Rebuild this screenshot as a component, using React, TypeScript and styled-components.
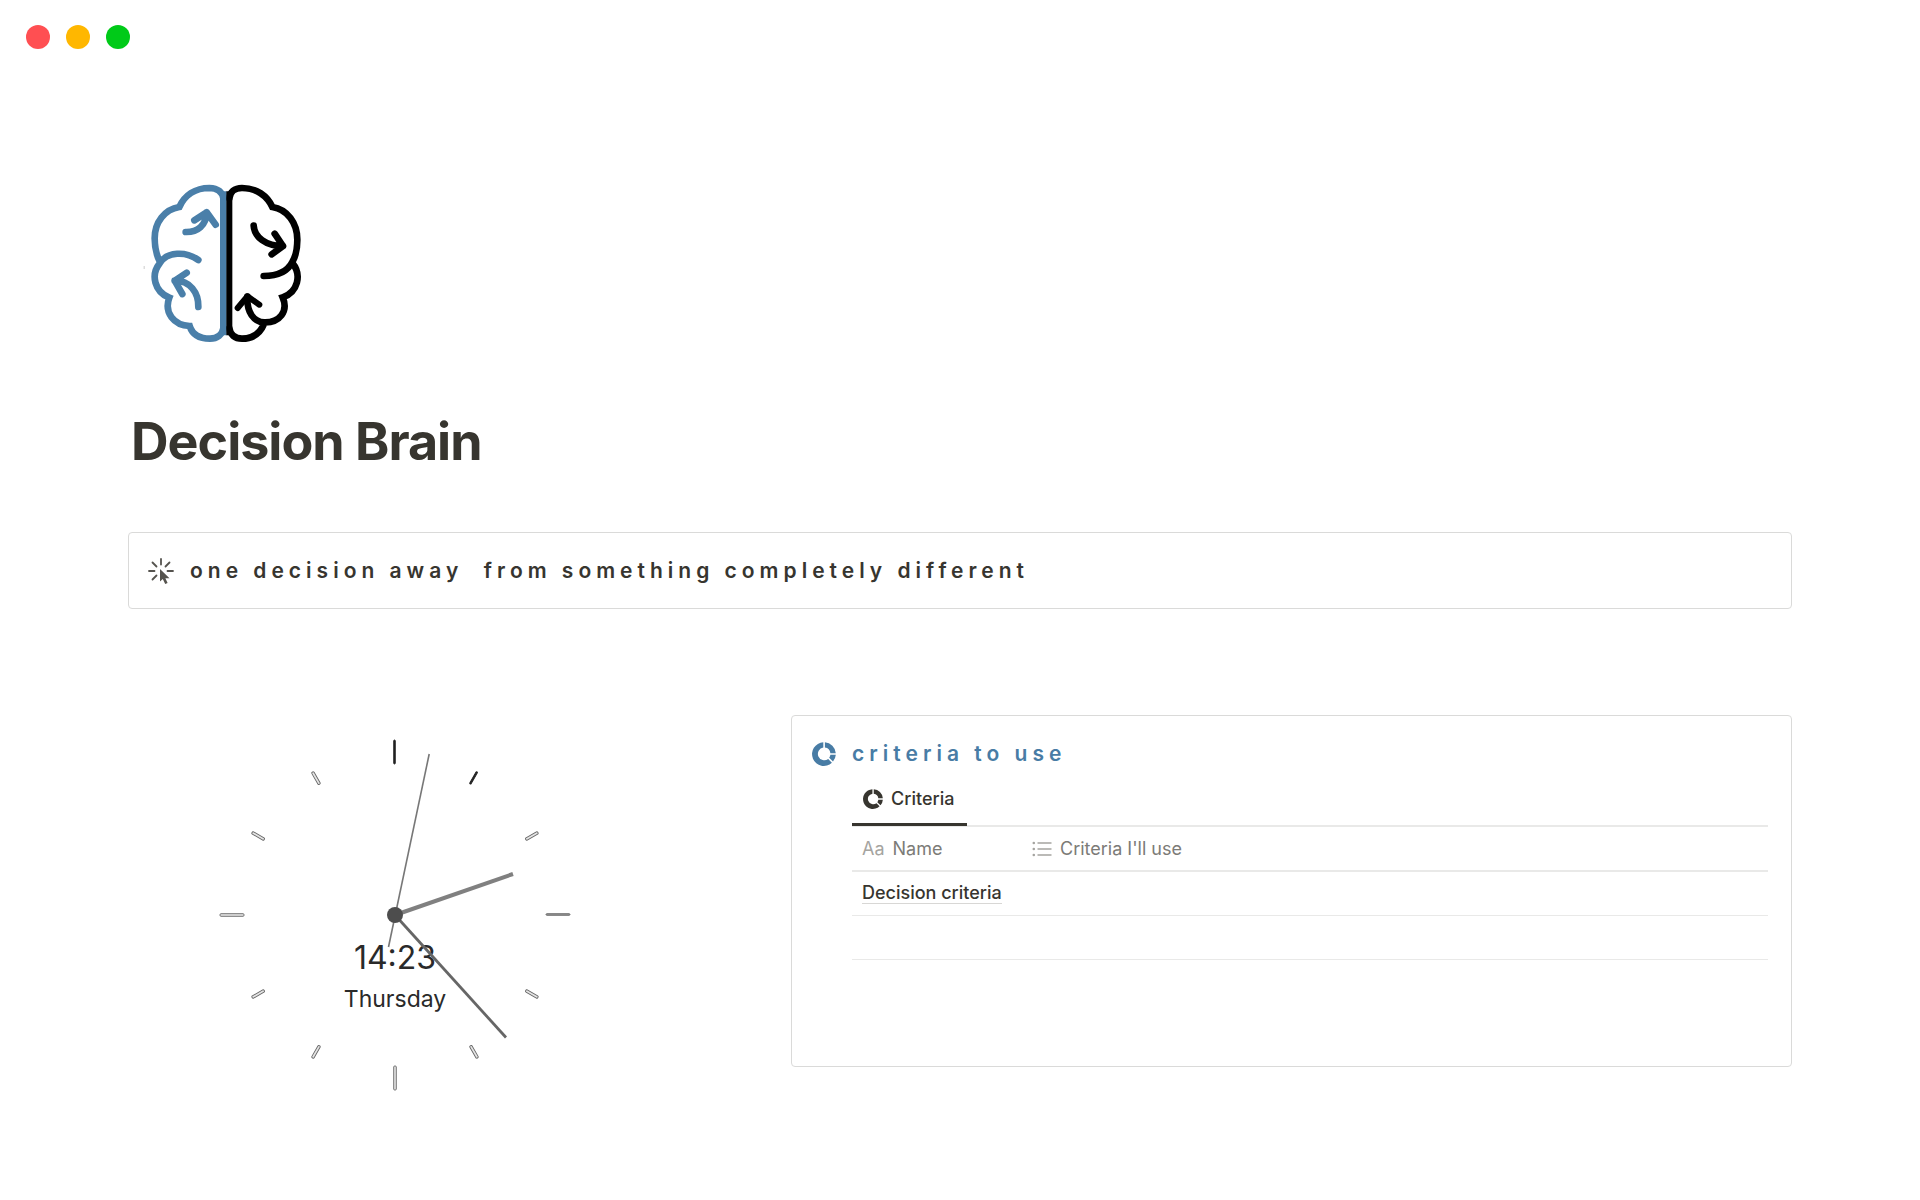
import React from "react";
import styled, { createGlobalStyle } from "styled-components";

const ink = "#37352f";
const blue = "#487ca5";
const line = "#e9e9e8";
const frame = "#dadad9";

const GlobalStyle = createGlobalStyle`
  * { box-sizing: border-box; }
  body {
    margin: 0;
    background: #fff;
    color: ${ink};
    font-family: Inter, "Liberation Sans", sans-serif;
  }
`;

const WindowBar = styled.header`
  display: flex;
  gap: 16px;
  padding: 25px 26px 0;
`;

const Dot = styled.button<{ $color: string }>`
  width: 24px;
  height: 24px;
  padding: 0;
  border: 0;
  border-radius: 50%;
  background: ${(p) => p.$color};
`;

const Page = styled.main`
  padding: 121px 128px 100px;
`;

const Brain = styled.svg`
  display: block;
  width: 190px;
  height: 190px;
  margin-left: 2px;
`;

const Title = styled.h1`
  margin: 50px 0 0;
  padding-left: 3px;
  font-size: 52px;
  line-height: 64px;
  font-weight: 700;
  letter-spacing: -1px;
`;

const Callout = styled.section`
  display: flex;
  align-items: center;
  gap: 16px;
  height: 77px;
  margin-top: 58px;
  padding: 1px 19px 0;
  border: 1px solid ${frame};
  border-radius: 4px;
`;

const Spaced = styled.h2<{ $color: string }>`
  margin: 0;
  font-size: 21px;
  line-height: 32px;
  font-weight: 600;
  letter-spacing: 5px;
  white-space: pre-wrap;
  color: ${(p) => p.$color};
`;

const Columns = styled.div`
  display: grid;
  grid-template-columns: minmax(0, 617fr) minmax(0, 1001fr);
  column-gap: 46px;
  align-items: start;
  margin-top: 106px;
`;

const Clock = styled.svg`
  display: block;
  width: 390px;
  height: 390px;
  margin: 5px 0 0 72px;
  font-family: Inter, "Liberation Sans", sans-serif;
`;

const Card = styled.section`
  padding: 22px 23px 106px 20px;
  border: 1px solid ${frame};
  border-radius: 4px;
`;

const CardHead = styled.div`
  display: flex;
  align-items: center;
  gap: 16px;
`;

const Database = styled.div`
  margin-left: 40px;
`;

const Tabs = styled.div`
  display: flex;
  border-bottom: 2px solid ${line};
`;

const Tab = styled.button`
  display: flex;
  align-items: center;
  gap: 8px;
  height: 56px;
  margin-bottom: -1px;
  padding: 5px 13px 0 11px;
  border: 0;
  border-bottom: 3px solid ${ink};
  background: none;
  color: ${ink};
  font: 500 18px/24px Inter, "Liberation Sans", sans-serif;
`;

const Table = styled.table`
  width: 100%;
  border-collapse: collapse;
  table-layout: fixed;
  font-size: 18px;
  line-height: 24px;
`;

const Cell = styled.td`
  height: 44px;
  padding: 0 10px;
  border-bottom: 1px solid ${line};
  text-align: left;
`;

const HeadCell = styled(Cell)<{ $width?: string }>`
  width: ${(p) => p.$width ?? "auto"};
  border-bottom-width: 2px;
  color: #7c7b77;
  font-weight: 400;
`;

const Property = styled.span`
  display: flex;
  align-items: center;
  gap: 8px;
`;

const Kind = styled.span`
  color: #a5a4a0;
`;

const PageLink = styled.a`
  border-bottom: 1px solid #d8d7d5;
  color: ${ink};
  font-weight: 500;
  text-decoration: none;
`;

const DonutIcon = ({ size, color }: { size: number; color: string }) => (
  <svg width={size} height={size} viewBox="0 0 24 24" aria-hidden="true">
    <path
      fill={color}
      d="M11.3 0.3V5.6A6.4 6.4 0 1 0 16.2 17L19.9 20.7A11.8 11.8 0 1 1 11.3 0.3ZM12.9 0.3A11.8 11.8 0 0 1 23.8 11.2H18.4A6.4 6.4 0 0 0 12.9 5.6ZM18.4 12.8H23.8A11.8 11.8 0 0 1 21 19.6L17.2 15.8A6.4 6.4 0 0 0 18.4 12.8Z"
    />
  </svg>
);

const ClickIcon = () => (
  <svg width="26" height="26" viewBox="0 0 26 26" aria-hidden="true">
    <g stroke="#55534e" strokeWidth="1.8" strokeLinecap="round">
      <path d="M13 1V6.5M4.5 4.5L8.5 8.5M21.5 4.5L17.5 8.5M1 13H6.5M19.5 13H25M4.5 21.5L8.5 17.5" />
    </g>
    <path fill="#55534e" d="M12 11V23.5L14.8 21L17.2 26L19.6 25L17.4 20.2H21.5Z" />
  </svg>
);

const ListIcon = () => (
  <svg width="20" height="16" viewBox="0 0 20 16" aria-hidden="true">
    <path stroke="#a5a4a0" strokeWidth="1.5" d="M5.5 2H19.5M5.5 8H19.5M5.5 14H19.5" />
    <g fill="#a5a4a0">
      <circle cx="1.8" cy="2" r="1.3" />
      <circle cx="1.8" cy="8" r="1.3" />
      <circle cx="1.8" cy="14" r="1.3" />
    </g>
  </svg>
);

const BrainLogo = () => (
  <Brain viewBox="0 0 570 570" role="img" aria-label="Brain">
    <g fill="none" strokeWidth="20" strokeLinecap="round" strokeLinejoin="miter">
      <g stroke="#4a7fa9">
        <path d="M280 85C277 66 262 55 238 54C196 54 164 76 148 111C104 118 74 157 74 205C74 235 80 257 90 276M205 270C168 243 111 244 89 280C61 315 74 366 118 383C101 428 132 466 179 468C187 494 209 506 240 506C262 506 277 494 280 475" />
        <path strokeLinejoin="round" d="M167 186C202 187 229 166 230 127M193 151L230 127L257 164" />
        <path strokeLinejoin="round" d="M205 411C206 367 180 332 134 332M170 308L134 332L157 372" />
      </g>
      <g stroke="#000">
        <path d="M298 85C300 66 313 54 336 54C380 54 412 78 427 111C472 118 502 159 502 209C502 239 497 259 487 276C474 302 444 318 401 318M487 279C516 314 504 366 458 382C476 424 449 458 403 457C371 456 350 427 352 380M403 460C391 490 370 506 336 506C314 506 301 494 298 475" />
        <path strokeLinejoin="round" strokeWidth="18" d="M323 414L352 379L388 404" />
        <path strokeLinejoin="round" d="M371 167C373 201 407 228 459 228M434 191L459 228L425 253" />
      </g>
    </g>
    <path fill="#4a7fa9" d="M270 64H290V496H270Z" />
    <path fill="#000" d="M289 64H307V496H289Z" />
    <path fill="#ccc" d="M41 288H44V297H41Z" />
  </Brain>
);

const ticks = Array.from({ length: 12 }, (_, i) => i);

const ClockFace = () => (
  <Clock viewBox="-195 -195 390 390" role="img" aria-label="14:23 Thursday">
    {ticks.map((i) => {
      const long = i % 3 === 0;
      const solid = i < 2;
      return (
        <rect
          key={i}
          x={-1.3}
          y={long ? -175 : -165}
          width={i === 3 || solid ? 1.6 : 2.6}
          height={long ? 24 : 14}
          rx={1}
          transform={`rotate(${i * 30})`}
          fill={solid ? "#222" : i === 3 ? "#999" : "#e4e4e4"}
          stroke={solid ? "#222" : "#666"}
          strokeWidth={0.9}
        />
      );
    })}
    <g fill="#2a2a2a" textAnchor="middle">
      <text x="0" y="54" fontSize="32">14:23</text>
      <text x="0" y="92" fontSize="23">Thursday</text>
    </g>
    <g fill="none">
      <path stroke="#808080" strokeWidth="4" d="M0 0L118 -41" />
      <path stroke="#666" strokeWidth="2.8" d="M0 0L111 122.5" />
      <path stroke="#777" strokeWidth="1.6" d="M-6.5 32L34.2 -161" />
    </g>
    <circle r="8" fill="#4d4d4d" />
  </Clock>
);

export default function App() {
  return (
    <>
      <GlobalStyle />
      <WindowBar>
        <Dot $color="#ff4f52" aria-label="Close" />
        <Dot $color="#ffb700" aria-label="Minimise" />
        <Dot $color="#00ca18" aria-label="Zoom" />
      </WindowBar>
      <Page>
        <BrainLogo />
        <Title>Decision Brain</Title>
        <Callout>
          <ClickIcon />
          <Spaced as="p" $color={ink}>
            {"one decision away  from something completely different"}
          </Spaced>
        </Callout>
        <Columns>
          <ClockFace />
          <Card>
            <CardHead>
              <DonutIcon size={24} color={blue} />
              <Spaced $color={blue}>criteria to use</Spaced>
            </CardHead>
            <Database>
              <Tabs role="tablist">
                <Tab role="tab" aria-selected="true">
                  <DonutIcon size={20} color={ink} />
                  Criteria
                </Tab>
              </Tabs>
              <Table>
                <thead>
                  <tr>
                    <HeadCell as="th" $width="170px">
                      <Property>
                        <Kind>Aa</Kind>Name
                      </Property>
                    </HeadCell>
                    <HeadCell as="th">
                      <Property>
                        <ListIcon />
                        Criteria I'll use
                      </Property>
                    </HeadCell>
                  </tr>
                </thead>
                <tbody>
                  <tr>
                    <Cell>
                      <PageLink href="#decision-criteria">Decision criteria</PageLink>
                    </Cell>
                    <Cell />
                  </tr>
                  <tr>
                    <Cell />
                    <Cell />
                  </tr>
                </tbody>
              </Table>
            </Database>
          </Card>
        </Columns>
      </Page>
    </>
  );
}
